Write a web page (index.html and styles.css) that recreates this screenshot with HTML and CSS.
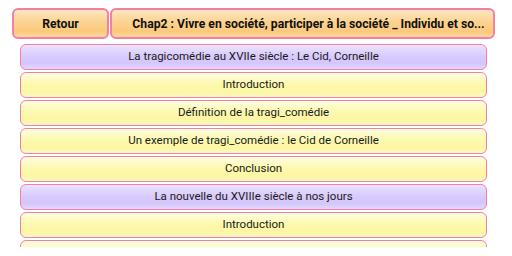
FILE: index.html
```html
<!DOCTYPE html>
<html lang="fr">
<head>
  <meta charset="UTF-8" />
  <title>Chap2</title>
  <link rel="stylesheet" href="styles.css">
</head>
<body>
  <div class="header">
    <div class="btn back-btn">Retour</div>
    <div class="btn title-btn">Chap2 : Vivre en société, participer à la société _ Individu et so...</div>
  </div>

  <div class="list">
    <div class="row section">La tragicomédie au XVIIe siècle : Le Cid, Corneille</div>
    <div class="row item">Introduction</div>
    <div class="row item">Définition de la tragi_comédie</div>
    <div class="row item">Un exemple de tragi_comédie : le Cid de Corneille</div>
    <div class="row item">Conclusion</div>
    <div class="row section">La nouvelle du XVIIIe siècle à nos jours</div>
    <div class="row item">Introduction</div>
    <div class="row item">Définition de la nouvelle</div>
  </div>
</body>
</html>
```

FILE: styles.css
```css
* { box-sizing: border-box; }
html, body {
  margin: 0;
  padding: 0;
}
body {
  background: #ffffff;
  font-family: Roboto, "Noto Sans", sans-serif;
  color: #1a1a1a;
}

.header {
  display: flex;
  gap: 1px;
  padding: 8px 17px 0 12px;
}
.btn {
  height: 31px;
  line-height: 28px;
  border: 2px solid #f27fa6;
  border-radius: 6px;
  background: linear-gradient(#fde7c0, #fbd390 45%, #fcc97c 80%, #fdd89e);
  font-weight: bold;
  font-size: 12.2px;
  text-align: center;
  color: #111;
}
.back-btn {
  width: 97px;
  flex-shrink: 0;
}
.title-btn {
  flex: 1;
  min-width: 0;
  padding: 0 4px 0 16px;
  white-space: nowrap;
  overflow: hidden;
}

.list {
  margin: 5px 25px 0 20px;
  height: 203px;
  overflow: hidden;
  display: flex;
  flex-direction: column;
  gap: 2px;
}
.row {
  flex-shrink: 0;
  height: 26px;
  line-height: 23px;
  border: 1.5px solid #f27fa6;
  border-radius: 6px;
  font-size: 11.5px;
  text-align: center;
}
.section {
  background: linear-gradient(#ebe3fd, #d9cbfc 45%, #d4c5fb 75%, #e2d8fc);
}
.item {
  background: linear-gradient(#fefde0, #fdf9b0 45%, #fcf6a2 75%, #fdf8c2);
}
```
